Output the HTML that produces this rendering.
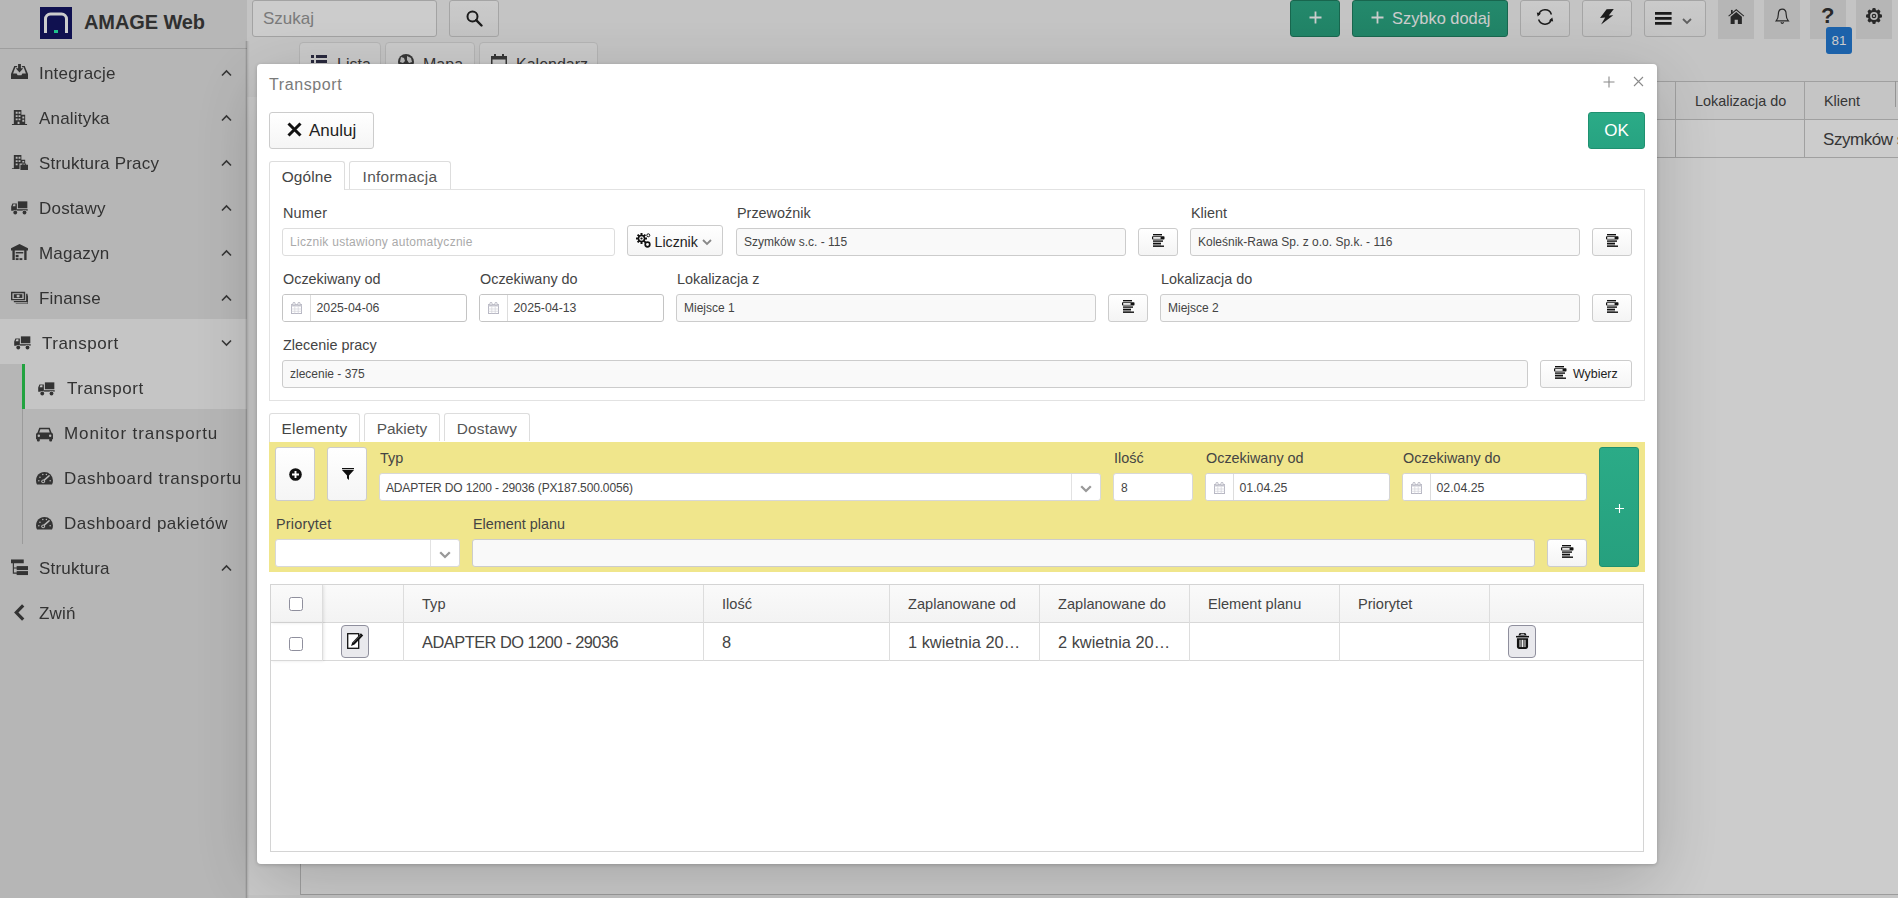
<!DOCTYPE html>
<html lang="pl">
<head>
<meta charset="utf-8">
<title>AMAGE Web - Transport</title>
<style>
*{box-sizing:border-box;margin:0;padding:0}
html,body{width:1898px;height:898px;overflow:hidden}
body{font-family:"Liberation Sans",sans-serif;color:#444;background:#fff;position:relative}
.abs{position:absolute}
#menu{will-change:transform}
svg{display:block}
#page{position:absolute;left:0;top:0;width:1898px;height:898px;background:#f5f5f5;overflow:hidden}
#content{position:absolute;left:247px;top:97px;width:1651px;height:801px;background:#fdfdfd}
#side{position:absolute;left:0;top:0;width:247px;height:898px;background:#e4e4e4}
#sidesh{position:absolute;left:245px;top:41px;width:5px;height:857px;background:linear-gradient(to right,rgba(0,0,0,0),rgba(0,0,0,.17) 30%,rgba(0,0,0,.12) 45%,rgba(0,0,0,.03) 75%,rgba(0,0,0,0))}
#sidehead{position:absolute;left:0;top:0;width:247px;height:49px;border-bottom:1px solid #c6c6c6;background:#e5e5e5}
#logo{position:absolute;left:40px;top:7px;width:32px;height:32px;background:#141664}
#menu{position:absolute;left:0;top:49px;width:247px;height:849px;background:#e4e4e4}
#brand{position:absolute;left:84px;top:9px;font-size:20px;font-weight:bold;color:#3c3c3c;letter-spacing:-.1px;white-space:nowrap;line-height:26px}
.mi{position:absolute;left:0;width:247px;height:45px;font-size:17px;letter-spacing:.2px;color:#404040;line-height:45px;white-space:nowrap}
.mi .t{position:absolute;left:39px;top:2px}
.mi .ic{position:absolute;left:11px;top:15px;width:17px;height:17px}
.mi .ch{position:absolute;left:221px;top:20px;width:11px;height:8px}
.sub{position:absolute;left:22px;width:225px;height:45px;font-size:17px;letter-spacing:.2px;color:#404040;line-height:45px;white-space:nowrap;background:#e4e4e4;border-left:1px solid #c2c2c2}
.sub .t{position:absolute;left:41px;top:2px}
.sub .ic{position:absolute;left:13px;top:16px;width:17px;height:17px}
.tb{position:absolute;top:0;height:37px;border:1px solid #cfcfcf;border-radius:3px;background:linear-gradient(#fefefe,#f4f4f4)}
.tbg{position:absolute;top:0;height:37px;border:1px solid #1f8062;border-radius:3px;background:linear-gradient(#2dab87,#29a480);color:#fff;font-size:16.4px;line-height:34px;white-space:nowrap}
.sq{position:absolute;top:0;width:36px;height:39px;background:#e4e4e4}
.ptab{position:absolute;top:42px;height:40px;border:1px solid #e2e2e2;border-radius:4px 4px 0 0;background:#fdfdfd;font-size:16px;color:#444;line-height:38px;white-space:nowrap}
#mi{position:absolute;left:0;top:4px;width:1400px;height:792px;background:#fff}
#mc{position:absolute;left:0;top:-4px;width:1400px;height:800px}
#ov{position:absolute;left:0;top:0;width:1898px;height:898px;background:rgba(0,0,0,.2)}
#modal{position:absolute;left:257px;top:64px;width:1400px;height:800px;background:#fff;border-radius:4px;box-shadow:0 1px 4px rgba(0,0,0,.2),0 18px 70px rgba(0,0,0,.19)}
#mc .title{position:absolute;left:12px;top:9.500px;font-size:16px;letter-spacing:.6px;color:#7a7a7a;line-height:22px}
.btn{position:absolute;border:1px solid #ccc;border-radius:3px;background:linear-gradient(#fff,#f5f5f5);color:#222}
.inp{position:absolute;height:28px;border:1px solid #ccc;border-radius:3px;background:#f9f9f9;font-size:12px;line-height:26px;color:#444;padding-left:7px;white-space:nowrap;overflow:hidden}
.inp.w{background:#fff}
.lbl{position:absolute;font-size:14.400px;line-height:18px;color:#444;white-space:nowrap}
.tab{position:absolute;height:28px;border:1px solid #ddd;border-bottom:none;border-radius:3px 3px 0 0;font-size:15.400px;line-height:30px;color:#555;text-align:center;white-space:nowrap;background:#fff}
.tab.on{color:#444;z-index:2;height:29px}

.pick{position:absolute;width:40px;height:28px;border:1px solid #ccc;border-radius:3px;background:linear-gradient(#fff,#f4f4f4)}
.pick svg,.pk{position:absolute;left:13px;top:5px;width:13px;height:13px}
.addon{position:absolute;left:0;top:0;width:28px;height:26px;border-right:1px solid #ddd;background:#fff}
.addon svg{position:absolute;left:8px;top:7px;width:11px;height:12px}
.th{position:absolute;top:0;height:38px;border-right:1px solid #ddd;font-size:14.600px;line-height:39px;color:#444;padding-left:18px;white-space:nowrap}
.td{position:absolute;top:38px;height:38px;border-right:1px solid #ddd;font-size:16.400px;line-height:39px;color:#444;padding-left:18px;white-space:nowrap;overflow:hidden}
.cb{position:absolute;width:14px;height:14px;border:1px solid #8f8f9d;border-radius:2.500px;background:#fff}
.fxb{position:absolute;width:28px;height:33px;border:1px solid #8f8f9d;border-radius:4px;background:#e9e9ed}
</style>
</head>
<body>
<div id="page">
<div id="content"></div>
<div class="abs" style="left:300px;top:81px;width:1598px;height:814px;background:#fff;border-left:1px solid #c9c9c9;border-bottom:1px solid #c4c4c4"></div>
<div class="abs" style="left:247px;top:895px;width:1651px;height:3px;background:#f7f7f7"></div>
<div class="ptab" style="left:299px;width:82px"><svg class="abs" style="left:11px;top:12px" width="16" height="14" viewBox="0 0 16 14"><g fill="#33334d"><rect x="0" y="0" width="3" height="3"/><rect x="5" y="0" width="11" height="3"/><rect x="0" y="5" width="3" height="3"/><rect x="5" y="5" width="11" height="3"/><rect x="0" y="10" width="3" height="3"/><rect x="5" y="10" width="11" height="3"/></g></svg><span class="abs" style="left:37px;top:3px">Lista</span></div>
<div class="ptab" style="left:385px;width:90px"><svg class="abs" style="left:12px;top:11px" width="16" height="16" viewBox="0 0 16 16"><circle cx="8" cy="8" r="8" fill="#444"/><path d="M3 3l3 1 1 3-2 2-3-1zM9 2l4 2 1 4-3 1-2-3zM6 10l4 1-1 4-3-2z" fill="#e8e8e8"/></svg><span class="abs" style="left:37px;top:3px">Mapa</span></div>
<div class="ptab" style="left:479px;width:119px"><svg class="abs" style="left:11px;top:11px" width="16" height="16" viewBox="0 0 16 16"><path d="M0 2h16v14H0zM1.500 5.500v9h13v-9z" fill="#444" fill-rule="evenodd"/><rect x="3" y="0" width="2" height="4" fill="#444"/><rect x="11" y="0" width="2" height="4" fill="#444"/></svg><span class="abs" style="left:36px;top:3px">Kalendarz</span></div>
<div class="abs" style="left:1657px;top:81px;width:241px;height:39px;background:#f7f7f7;border-top:1px solid #c8c8c8;border-bottom:1px solid #c8c8c8"></div>
<div class="abs" style="left:1657px;top:157px;width:241px;height:1px;background:#c8c8c8"></div>
<div class="abs" style="left:1675px;top:81px;width:1px;height:77px;background:#c8c8c8"></div>
<div class="abs" style="left:1804px;top:81px;width:1px;height:77px;background:#c8c8c8"></div>
<div class="abs" style="left:1895px;top:81px;width:1px;height:26px;background:#bbb"></div>
<div class="abs" style="left:1695px;top:91px;font-size:14.400px;line-height:20px;color:#444;white-space:nowrap">Lokalizacja do</div>
<div class="abs" style="left:1824px;top:91px;font-size:14.400px;line-height:20px;color:#444;white-space:nowrap">Klient</div>
<div class="abs" style="left:1823px;top:128px;font-size:17px;letter-spacing:-.45px;line-height:24px;color:#444;white-space:nowrap">Szymków s.c.</div>
<div class="tb" style="left:252px;width:185px;background:#fff;border-color:#ccc"><span class="abs" style="left:10px;top:6px;font-size:17px;line-height:24px;color:#999">Szukaj</span></div>
<div class="tb" style="left:449px;width:50px"><svg class="abs" style="left:16px;top:9px" width="17" height="17" viewBox="0 0 17 17"><circle cx="6.500" cy="6.500" r="5" fill="none" stroke="#222" stroke-width="2"/><path d="M10.200 10.200L15.500 15.500" stroke="#222" stroke-width="2.400" stroke-linecap="round"/></svg></div>
<div class="tbg" style="left:1290px;width:50px"><svg class="abs" style="left:18px;top:10px" width="13" height="13" viewBox="0 0 13 13"><path d="M6.500 0.500v12M0.500 6.500h12" stroke="#fff" stroke-width="1.800"/></svg></div>
<div class="tbg" style="left:1352px;width:156px"><svg class="abs" style="left:18px;top:10px" width="13" height="13" viewBox="0 0 13 13"><path d="M6.500 0.500v12M0.500 6.500h12" stroke="#fff" stroke-width="1.800"/></svg><span class="abs" style="left:39px;top:0">Szybko dodaj</span></div>
<div class="tb" style="left:1520px;width:50px"><svg class="abs" style="left:14.500px;top:7px" width="18" height="18" viewBox="0 0 18 18"><path d="M2.600 6.800A6.700 6.700 0 0 1 15.400 6.400" fill="none" stroke="#222" stroke-width="1.500"/><path d="M15.400 11.200A6.700 6.700 0 0 1 2.600 11.600" fill="none" stroke="#222" stroke-width="1.500"/><path d="M.8 4.600l4.200 1-3.300 3z" fill="#222"/><path d="M17.200 13.400l-4.200-1 3.300-3z" fill="#222"/></svg></div>
<div class="tb" style="left:1582px;width:50px"><svg class="abs" style="left:17px;top:8px" width="14" height="16" viewBox="0 0 14 16"><path d="M6.600 .3L13.800 0 8.800 6.600l4.500-.4L1.100 15.500l4.100-6.900L0 9z" fill="#222"/></svg></div>
<div class="tb" style="left:1644px;width:62px"><svg class="abs" style="left:10px;top:11px" width="17" height="13" viewBox="0 0 17 13"><path d="M0 1.400h16.600M0 6.400h16.600M0 11.400h16.600" stroke="#222" stroke-width="2.800"/></svg><svg class="abs" style="left:37px;top:17px" width="10" height="7.0" viewBox="0 0 10 7"><path d="M1 1l4 4 4-4" fill="none" stroke="#777" stroke-width="1.8"/></svg></div>
<div class="sq" style="left:1718px"><svg class="abs" style="left:10px;top:8.500px" width="16.500" height="15" viewBox="0 0 17 16"><g transform="translate(17 0) scale(-1 1)"><path d="M8.500 0L17 7.200l-.7 .8L8.500 1.500.7 8 0 7.200z" fill="#333"/><path d="M2.500 8.200l6-5 6 5v7.800h-4.300v-4.500h-3.400v4.500H2.500z" fill="#333"/><rect x="12.300" y="1" width="1.800" height="4" fill="#333"/></g></svg></div>
<div class="sq" style="left:1764px"><svg class="abs" style="left:11px;top:8px" width="14.500" height="17.500" viewBox="0 0 16 18" preserveAspectRatio="none"><path d="M8 1.200c2.800 0 4.300 2.300 4.300 5.300 0 3.500 1 5.200 2.400 6.700H1.300c1.400-1.500 2.400-3.200 2.400-6.700C3.700 3.500 5.200 1.200 8 1.200z" fill="none" stroke="#333" stroke-width="1.300"/><path d="M6.500 14.700a1.600 1.600 0 0 0 3 0" fill="none" stroke="#333" stroke-width="1.300"/></svg></div>
<div class="sq" style="left:1810px"><span class="abs" style="left:11px;top:3px;font-size:22px;font-weight:bold;line-height:26px;color:#333">?</span></div>
<div class="sq" style="left:1856px"><svg class="abs" style="left:10px;top:8px" width="16" height="16" viewBox="0 0 16 16"><g fill="#333"><circle cx="8" cy="8" r="6.200"/><rect x="6.300" y="0" width="3.400" height="16" rx="1.200"/><rect x="0" y="6.300" width="16" height="3.400" rx="1.200"/><rect x="6.300" y="0" width="3.400" height="16" rx="1.200" transform="rotate(45 8 8)"/><rect x="6.300" y="0" width="3.400" height="16" rx="1.200" transform="rotate(-45 8 8)"/></g><circle cx="8" cy="8" r="3.900" fill="#e4e4e4"/><circle cx="8" cy="8" r="2.300" fill="#333"/><circle cx="8" cy="8" r="1.100" fill="#e4e4e4"/></svg></div>
<div class="abs" style="left:1826px;top:27px;width:26px;height:27px;border-radius:3px;background:#237bd5;color:#fff;font-size:13.400px;line-height:28px;text-align:center">81</div>
<div id="side">
<div id="sidehead"><div id="logo"><svg width="32" height="32" viewBox="0 0 32 32"><path d="M5.500 26V12a5 5 0 0 1 5-5h11a5 5 0 0 1 5 5V26" fill="none" stroke="#ffffff" stroke-width="3"/><rect x="14" y="23" width="4" height="3" fill="#27f0b0"/></svg></div><div id="brand">AMAGE Web</div></div>
<div id="menu">
<div class="mi" style="top:0px"><svg class="ic" viewBox="0 0 18 18"><path d="M3.500 2h3v1.500H4.600L2.200 10H6l1 2h4l1-2h3.800L13.400 3.500h-1.900V2h3L18 10.500V16H0v-5.500z" fill="#404040"/><path d="M7.500 0h3v4.500h2.500L9 9 5 4.500h2.500z" fill="#404040"/></svg><span class="t">Integracje</span><svg class="ch" viewBox="0 0 11 8"><path d="M1 6.500L5.500 2 10 6.500" fill="none" stroke="#444" stroke-width="1.600"/></svg></div>
<div class="mi" style="top:45px"><svg class="ic" viewBox="0 0 18 18"><path d="M3 1h8v5h4v10h2v1H1v-1h2zM5 3v2h2V3zM8 3v2h2V3zM5 6.500v2h2v-2zM8 6.500v2h2v-2zM5 10v2h2v-2zM8 10v2h2v-2zM12 8v2h2V8zM12 11.500v2h2v-2zM7 13.500V16h2v-2.500z" fill="#404040" fill-rule="evenodd"/></svg><span class="t">Analityka</span><svg class="ch" viewBox="0 0 11 8"><path d="M1 6.500L5.500 2 10 6.500" fill="none" stroke="#444" stroke-width="1.600"/></svg></div>
<div class="mi" style="top:90px"><svg class="ic" viewBox="0 0 18 18"><path d="M3 1h8v5h4v4h-6v6H1v-1h2zM5 3v2h2V3zM8 3v2h2V3zM5 6.500v2h2v-2zM8 6.500v2h2v-2zM5 10v2h2v-2zM12 7.500v1.500h2V7.500z" fill="#404040" fill-rule="evenodd"/><path d="M10 11.500h8V17h-8zM12 11.500v-1.500h4v1.500h-1v-.7h-2v.7z" fill="#404040"/></svg><span class="t">Struktura Pracy</span><svg class="ch" viewBox="0 0 11 8"><path d="M1 6.500L5.500 2 10 6.500" fill="none" stroke="#444" stroke-width="1.600"/></svg></div>
<div class="mi" style="top:135px"><svg class="ic" viewBox="0 0 18 18"><rect x="7.300" y="2.500" width="10" height="7.300" fill="#404040"/><path d="M.2 12.500V8l1.300-3.300h4.700v7.800zM1.700 7.800h3V5.600H2.600z" fill="#404040" fill-rule="evenodd"/><rect x="6.200" y="10.800" width="11.500" height="1.500" fill="#404040"/><circle cx="4.500" cy="14.300" r="2.700" fill="#e4e4e4"/><circle cx="14.300" cy="14.300" r="2.700" fill="#e4e4e4"/><circle cx="4.500" cy="14.300" r="2" fill="#404040"/><circle cx="14.300" cy="14.300" r="2" fill="#404040"/></svg><span class="t">Dostawy</span><svg class="ch" viewBox="0 0 11 8"><path d="M1 6.500L5.500 2 10 6.500" fill="none" stroke="#444" stroke-width="1.600"/></svg></div>
<div class="mi" style="top:180px"><svg class="ic" viewBox="0 0 18 18"><path d="M9 0l9 4.500V7h-1.500v10H14V7H4v10H1.500V7H0V4.500z" fill="#404040"/><rect x="5" y="8.500" width="8" height="1.500" fill="#404040"/><rect x="5" y="11.500" width="3" height="2.500" fill="#404040"/><rect x="5" y="15" width="3" height="2" fill="#404040"/><rect x="9" y="15" width="3" height="2" fill="#404040"/></svg><span class="t">Magazyn</span><svg class="ch" viewBox="0 0 11 8"><path d="M1 6.500L5.500 2 10 6.500" fill="none" stroke="#444" stroke-width="1.600"/></svg></div>
<div class="mi" style="top:225px"><svg class="ic" viewBox="0 0 18 18"><path d="M0 3h15v9H0zM1.500 4.500v6h12v-6z" fill="#404040" fill-rule="evenodd"/><path d="M3 5.500h9v4H3z" fill="#404040"/><ellipse cx="7.500" cy="7.500" rx="1.700" ry="1.500" fill="#e4e4e4"/><path d="M16 5h1.500v9H3v-1.200h13zM17.500 7H18v8.500H5V15h12.500z" fill="#404040"/></svg><span class="t">Finanse</span><svg class="ch" viewBox="0 0 11 8"><path d="M1 6.500L5.500 2 10 6.500" fill="none" stroke="#444" stroke-width="1.600"/></svg></div>
<div class="mi" style="top:270px;background:#f7f7f7"><span class="abs" style="left:3px;top:0;width:30px;height:45px"><svg class="ic" viewBox="0 0 18 18"><rect x="7.300" y="2.500" width="10" height="7.300" fill="#404040"/><path d="M.2 12.500V8l1.300-3.300h4.700v7.800zM1.700 7.800h3V5.600H2.600z" fill="#404040" fill-rule="evenodd"/><rect x="6.200" y="10.800" width="11.500" height="1.500" fill="#404040"/><circle cx="4.500" cy="14.300" r="2.700" fill="#f7f7f7"/><circle cx="14.300" cy="14.300" r="2.700" fill="#f7f7f7"/><circle cx="4.500" cy="14.300" r="2" fill="#404040"/><circle cx="14.300" cy="14.300" r="2" fill="#404040"/></svg></span><span class="t" style="left:42px;letter-spacing:.5px">Transport</span><svg class="ch" viewBox="0 0 11 8"><path d="M1 1.500L5.500 6 10 1.500" fill="none" stroke="#444" stroke-width="1.600"/></svg></div>
<div class="sub" style="top:315px;background:#f7f7f7;border-left:3px solid #2bcc50"><span class="abs" style="left:0;top:0;width:30px;height:45px"><svg class="ic" viewBox="0 0 18 18"><rect x="7.300" y="2.500" width="10" height="7.300" fill="#404040"/><path d="M.2 12.500V8l1.300-3.300h4.700v7.800zM1.700 7.800h3V5.600H2.600z" fill="#404040" fill-rule="evenodd"/><rect x="6.200" y="10.800" width="11.500" height="1.500" fill="#404040"/><circle cx="4.500" cy="14.300" r="2.700" fill="#f7f7f7"/><circle cx="14.300" cy="14.300" r="2.700" fill="#f7f7f7"/><circle cx="4.500" cy="14.300" r="2" fill="#404040"/><circle cx="14.300" cy="14.300" r="2" fill="#404040"/></svg></span><span class="t" style="left:42px;letter-spacing:0.5px">Transport</span></div>
<div class="sub" style="top:360px"><svg class="ic" viewBox="0 0 18 18"><path d="M3.500 3h11l2 5.200c.9.300 1.500 1 1.500 2V15h-1v1.500c0 .6-.4 1-1 1h-1c-.6 0-1-.4-1-1V15H4v1.500c0 .6-.4 1-1 1H2c-.6 0-1-.4-1-1V15H0v-4.800c0-1 .6-1.700 1.500-2zM4.600 4.600L3.400 8h11.200l-1.200-3.400zM3 10a1.300 1.300 0 1 0 0 2.600A1.300 1.300 0 0 0 3 10zM15 10a1.300 1.300 0 1 0 0 2.600 1.300 1.300 0 0 0 0-2.600z" fill="#404040" fill-rule="evenodd"/></svg><span class="t" style="letter-spacing:0.9px">Monitor transportu</span></div>
<div class="sub" style="top:405px"><svg class="ic" viewBox="0 0 18 18"><path d="M9 2a9 9 0 0 1 9 9c0 1.600-.4 3-1.100 4.300H1.100A9 9 0 0 1 9 2z" fill="#404040"/><path d="M13.800 6.200L8.400 11" stroke="#e4e4e4" stroke-width="1.600" stroke-linecap="round"/><circle cx="7.600" cy="12" r="2" fill="#e4e4e4"/><circle cx="7.600" cy="12" r="1" fill="#404040"/><g fill="#e4e4e4"><circle cx="3" cy="11.500" r=".8"/><circle cx="4.200" cy="7.600" r=".8"/><circle cx="7.200" cy="4.800" r=".8"/><circle cx="11" cy="4.800" r=".8"/><circle cx="15" cy="11.500" r=".8"/></g></svg><span class="t" style="letter-spacing:0.67px">Dashboard transportu</span></div>
<div class="sub" style="top:450px"><svg class="ic" viewBox="0 0 18 18"><path d="M9 2a9 9 0 0 1 9 9c0 1.600-.4 3-1.100 4.300H1.100A9 9 0 0 1 9 2z" fill="#404040"/><path d="M13.800 6.200L8.400 11" stroke="#e4e4e4" stroke-width="1.600" stroke-linecap="round"/><circle cx="7.600" cy="12" r="2" fill="#e4e4e4"/><circle cx="7.600" cy="12" r="1" fill="#404040"/><g fill="#e4e4e4"><circle cx="3" cy="11.500" r=".8"/><circle cx="4.200" cy="7.600" r=".8"/><circle cx="7.200" cy="4.800" r=".8"/><circle cx="11" cy="4.800" r=".8"/><circle cx="15" cy="11.500" r=".8"/></g></svg><span class="t" style="letter-spacing:0.5px">Dashboard pakietów</span></div>
<div class="mi" style="top:495px"><svg class="ic" viewBox="0 0 18 18"><rect x="0" y=".5" width="13.500" height="4" fill="#404040"/><rect x="6" y="7.500" width="12" height="4.200" fill="#404040"/><rect x="6" y="12.800" width="12" height="4.200" fill="#404040"/><path d="M2.500 4v11h4M2.500 9.500h4" fill="none" stroke="#404040" stroke-width="1.200"/></svg><span class="t">Struktura</span><svg class="ch" viewBox="0 0 11 8"><path d="M1 6.500L5.500 2 10 6.500" fill="none" stroke="#444" stroke-width="1.600"/></svg></div>
<div class="mi" style="top:540px"><svg class="abs" style="left:14px;top:15px" width="11" height="17" viewBox="0 0 11 17"><path d="M9.200 1.300L2.300 8.500l6.900 7.200" fill="none" stroke="#404040" stroke-width="3.200"/></svg><span class="t">Zwiń</span></div>
</div>
</div>
<div id="sidesh"></div>
</div>
<div id="ov"></div>
<div id="modal"><div id="mi"><div id="mc">
<div class="title">Transport</div>
<svg class="abs" style="left:1346px;top:12px" width="12" height="12" viewBox="0 0 12 12"><path d="M6 0.500v11M0.500 6h11" stroke="#8a8a8a" stroke-width="1.100"/></svg>
<svg class="abs" style="left:1376px;top:12px" width="11" height="11" viewBox="0 0 11 11"><path d="M1 1l9 9M10 1l-9 9" stroke="#8a8a8a" stroke-width="1.100"/></svg>
<div class="btn" style="left:12px;top:48px;width:105px;height:37px"><svg class="abs" style="left:16.500px;top:8.500px" width="15" height="15" viewBox="0 0 15 15"><path d="M1.500 1.500l12 12M13.500 1.500l-12 12" stroke="#111" stroke-width="3"/></svg><span class="abs" style="left:39px;top:6px;font-size:17px;line-height:24px;color:#222">Anuluj</span></div>
<div class="abs" style="left:1331px;top:48px;width:57px;height:37px;border:1px solid #1f9170;border-radius:3px;background:linear-gradient(#2bab87,#27a381);color:#fff;font-size:17px;line-height:36px;text-align:center">OK</div>
<div class="abs" style="left:12px;top:125px;width:1376px;height:212px;border:1px solid #e2e2e2"></div>
<div class="tab on" style="left:12px;top:97px;width:76px;letter-spacing:.15px">Ogólne</div>
<div class="tab" style="left:92px;top:97px;width:102px;letter-spacing:.3px">Informacja</div>
<div class="lbl" style="left:26px;top:140px;letter-spacing:.2px">Numer</div>
<div class="lbl" style="left:480px;top:140px;">Przewoźnik</div>
<div class="lbl" style="left:934px;top:140px;">Klient</div>
<div class="inp w" style="left:25px;top:164px;width:333px;border-color:#ddd"><span style="color:#aaa;letter-spacing:.28px">Licznik ustawiony automatycznie</span></div>
<div class="btn" style="left:370px;top:161px;width:96px;height:31px"><svg class="abs" style="left:8px;top:7px" width="15" height="15" viewBox="0 0 15 15"><g fill="#111"><circle cx="5.500" cy="5.500" r="3.800"/><rect x="4.500" y="0" width="2" height="11"/><rect x="0" y="4.500" width="11" height="2"/><rect x="4.500" y="0" width="2" height="11" transform="rotate(45 5.500 5.500)"/><rect x="4.500" y="0" width="2" height="11" transform="rotate(-45 5.500 5.500)"/></g><circle cx="5.500" cy="5.500" r="2.200" fill="#fafafa"/><circle cx="5.500" cy="5.500" r="1.100" fill="#111"/><circle cx="11.500" cy="11.500" r="2.300" fill="none" stroke="#111" stroke-width="1.700"/><circle cx="12.300" cy="2.300" r="1.500" fill="none" stroke="#111" stroke-width="1"/></svg><span class="abs" style="left:26.500px;top:5.500px;font-size:14.200px;line-height:20px;color:#222">Licznik</span><svg class="abs" style="left:74px;top:13px" width="10" height="7.0" viewBox="0 0 10 7"><path d="M1 1l4 4 4-4" fill="none" stroke="#888" stroke-width="1.8"/></svg></div>
<div class="inp " style="left:479px;top:164px;width:390px;">Szymków s.c. - 115</div>
<div class="pick" style="left:881px;top:164px"><svg viewBox="0 0 13 13"><rect x="1" y="0" width="9" height="1.400" fill="#111"/><rect x="0" y="2.300" width="12.500" height="3.300" rx=".8" fill="#111"/><rect x="1.200" y="3.100" width="7.400" height="1.700" fill="#fff"/><rect x="1" y="6.400" width="10" height="1.400" fill="#111"/><rect x="1" y="8.700" width="8" height="1.400" fill="#111"/><rect x="1" y="10" width="8" height="1.600" fill="#888"/><rect x="1" y="11.500" width="11" height="1.400" fill="#111"/></svg></div>
<div class="inp " style="left:933px;top:164px;width:390px;">Koleśnik-Rawa Sp. z o.o. Sp.k. - 116</div>
<div class="pick" style="left:1335px;top:164px"><svg viewBox="0 0 13 13"><rect x="1" y="0" width="9" height="1.400" fill="#111"/><rect x="0" y="2.300" width="12.500" height="3.300" rx=".8" fill="#111"/><rect x="1.200" y="3.100" width="7.400" height="1.700" fill="#fff"/><rect x="1" y="6.400" width="10" height="1.400" fill="#111"/><rect x="1" y="8.700" width="8" height="1.400" fill="#111"/><rect x="1" y="10" width="8" height="1.600" fill="#888"/><rect x="1" y="11.500" width="11" height="1.400" fill="#111"/></svg></div>
<div class="lbl" style="left:26px;top:206px;">Oczekiwany od</div>
<div class="lbl" style="left:223px;top:206px;">Oczekiwany do</div>
<div class="lbl" style="left:420px;top:206px;">Lokalizacja z</div>
<div class="lbl" style="left:904px;top:206px;">Lokalizacja do</div>
<div class="inp w" style="left:25px;top:230px;width:185px;padding-left:33.500px;border-color:#c4c4c4;font-size:12.300px;line-height:26px">2025-04-06<div class="addon"><span class="abs" style="left:0;top:0px"><svg viewBox="0 0 11 12"><rect x=".5" y="2.500" width="10" height="9" fill="#fff" stroke="#b8b8c4" stroke-width="1"/><rect x=".5" y="2.500" width="10" height="2" fill="#cbcbd3"/><path d="M.5 7h10M.5 9.300h10M3.800 4.500v7M7.200 4.500v7" stroke="#d2d2da" stroke-width=".7"/><ellipse cx="3" cy="1.900" rx="1.100" ry="1.700" fill="#fff" stroke="#b4b4c0" stroke-width=".9"/><ellipse cx="8" cy="1.900" rx="1.100" ry="1.700" fill="#fff" stroke="#b4b4c0" stroke-width=".9"/></svg></span></div></div>
<div class="inp w" style="left:222px;top:230px;width:185px;padding-left:33.500px;border-color:#c4c4c4;font-size:12.300px;line-height:26px">2025-04-13<div class="addon"><span class="abs" style="left:0;top:0px"><svg viewBox="0 0 11 12"><rect x=".5" y="2.500" width="10" height="9" fill="#fff" stroke="#b8b8c4" stroke-width="1"/><rect x=".5" y="2.500" width="10" height="2" fill="#cbcbd3"/><path d="M.5 7h10M.5 9.300h10M3.800 4.500v7M7.200 4.500v7" stroke="#d2d2da" stroke-width=".7"/><ellipse cx="3" cy="1.900" rx="1.100" ry="1.700" fill="#fff" stroke="#b4b4c0" stroke-width=".9"/><ellipse cx="8" cy="1.900" rx="1.100" ry="1.700" fill="#fff" stroke="#b4b4c0" stroke-width=".9"/></svg></span></div></div>
<div class="inp " style="left:419px;top:230px;width:420px;">Miejsce 1</div>
<div class="pick" style="left:851px;top:230px"><svg viewBox="0 0 13 13"><rect x="1" y="0" width="9" height="1.400" fill="#111"/><rect x="0" y="2.300" width="12.500" height="3.300" rx=".8" fill="#111"/><rect x="1.200" y="3.100" width="7.400" height="1.700" fill="#fff"/><rect x="1" y="6.400" width="10" height="1.400" fill="#111"/><rect x="1" y="8.700" width="8" height="1.400" fill="#111"/><rect x="1" y="10" width="8" height="1.600" fill="#888"/><rect x="1" y="11.500" width="11" height="1.400" fill="#111"/></svg></div>
<div class="inp " style="left:903px;top:230px;width:420px;">Miejsce 2</div>
<div class="pick" style="left:1335px;top:230px"><svg viewBox="0 0 13 13"><rect x="1" y="0" width="9" height="1.400" fill="#111"/><rect x="0" y="2.300" width="12.500" height="3.300" rx=".8" fill="#111"/><rect x="1.200" y="3.100" width="7.400" height="1.700" fill="#fff"/><rect x="1" y="6.400" width="10" height="1.400" fill="#111"/><rect x="1" y="8.700" width="8" height="1.400" fill="#111"/><rect x="1" y="10" width="8" height="1.600" fill="#888"/><rect x="1" y="11.500" width="11" height="1.400" fill="#111"/></svg></div>
<div class="lbl" style="left:26px;top:272px;">Zlecenie pracy</div>
<div class="inp " style="left:25px;top:296px;width:1246px;">zlecenie - 375</div>
<div class="btn" style="left:1283px;top:296px;width:92px;height:28px"><span class="pk" style="left:13px;top:5px"><svg viewBox="0 0 13 13"><rect x="1" y="0" width="9" height="1.400" fill="#111"/><rect x="0" y="2.300" width="12.500" height="3.300" rx=".8" fill="#111"/><rect x="1.200" y="3.100" width="7.400" height="1.700" fill="#fff"/><rect x="1" y="6.400" width="10" height="1.400" fill="#111"/><rect x="1" y="8.700" width="8" height="1.400" fill="#111"/><rect x="1" y="10" width="8" height="1.600" fill="#888"/><rect x="1" y="11.500" width="11" height="1.400" fill="#111"/></svg></span><span class="abs" style="left:32px;top:5px;font-size:12.400px;line-height:16px;color:#222">Wybierz</span></div>
<div class="tab on" style="left:12px;top:349px;width:91px;letter-spacing:.2px">Elementy</div>
<div class="tab" style="left:107px;top:349px;width:76px">Pakiety</div>
<div class="tab" style="left:187px;top:349px;width:86px;letter-spacing:.2px">Dostawy</div>
<div class="abs" style="left:12px;top:378px;width:1376px;height:130px;background:#f0e68c"></div>
<div class="btn" style="left:18px;top:383px;width:40px;height:54px"><svg class="abs" style="left:13px;top:20px" width="13" height="13" viewBox="0 0 13 13"><circle cx="6.500" cy="6.500" r="6.300" fill="#111"/><path d="M6.500 3v7M3 6.500h7" stroke="#fff" stroke-width="1.900"/></svg></div>
<div class="btn" style="left:70px;top:383px;width:40px;height:54px"><svg class="abs" style="left:14px;top:20px" width="12" height="13" viewBox="0 0 12 13"><path d="M0 0h12v1.200H0zM0 2h12L7 7.500V12l-2-1.700V7.500z" fill="#111"/></svg></div>
<div class="lbl" style="left:123px;top:385px;">Typ</div>
<div class="lbl" style="left:857px;top:385px;">Ilość</div>
<div class="lbl" style="left:949px;top:385px;">Oczekiwany od</div>
<div class="lbl" style="left:1146px;top:385px;">Oczekiwany do</div>
<div class="inp w" style="left:122px;top:409px;width:722px;padding-left:6px;border-color:#d8d8d8;letter-spacing:-.15px;line-height:28px">ADAPTER DO 1200 - 29036 (PX187.500.0056)</div>
<div class="abs" style="left:814px;top:410px;width:1px;height:26px;background:#e2e2e2"></div><svg class="abs" style="left:823px;top:420.5px" width="12" height="8.4" viewBox="0 0 10 7"><path d="M1 1l4 4 4-4" fill="none" stroke="#999" stroke-width="1.9"/></svg><div class="inp w" style="left:856px;top:409px;width:80px;border-color:#d8d8d8;line-height:28px">8</div>
<div class="inp w" style="left:948px;top:409px;width:185px;padding-left:33.500px;border-color:#d4d4d4;font-size:12.300px;line-height:28px">01.04.25<div class="addon"><span class="abs" style="left:0;top:1px"><svg viewBox="0 0 11 12"><rect x=".5" y="2.500" width="10" height="9" fill="#fff" stroke="#b8b8c4" stroke-width="1"/><rect x=".5" y="2.500" width="10" height="2" fill="#cbcbd3"/><path d="M.5 7h10M.5 9.300h10M3.800 4.500v7M7.200 4.500v7" stroke="#d2d2da" stroke-width=".7"/><ellipse cx="3" cy="1.900" rx="1.100" ry="1.700" fill="#fff" stroke="#b4b4c0" stroke-width=".9"/><ellipse cx="8" cy="1.900" rx="1.100" ry="1.700" fill="#fff" stroke="#b4b4c0" stroke-width=".9"/></svg></span></div></div>
<div class="inp w" style="left:1145px;top:409px;width:185px;padding-left:33.500px;border-color:#d4d4d4;font-size:12.300px;line-height:28px">02.04.25<div class="addon"><span class="abs" style="left:0;top:1px"><svg viewBox="0 0 11 12"><rect x=".5" y="2.500" width="10" height="9" fill="#fff" stroke="#b8b8c4" stroke-width="1"/><rect x=".5" y="2.500" width="10" height="2" fill="#cbcbd3"/><path d="M.5 7h10M.5 9.300h10M3.800 4.500v7M7.200 4.500v7" stroke="#d2d2da" stroke-width=".7"/><ellipse cx="3" cy="1.900" rx="1.100" ry="1.700" fill="#fff" stroke="#b4b4c0" stroke-width=".9"/><ellipse cx="8" cy="1.900" rx="1.100" ry="1.700" fill="#fff" stroke="#b4b4c0" stroke-width=".9"/></svg></span></div></div>
<div class="abs" style="left:1342px;top:383px;width:40px;height:120px;border:1px solid #1f9170;border-radius:3px;background:linear-gradient(#2bab87,#26a07e)"><svg class="abs" style="left:15px;top:56px" width="9" height="9" viewBox="0 0 9 9"><path d="M4.500 0v9M0 4.500h9" stroke="#fff" stroke-width="1.100"/></svg></div>
<div class="lbl" style="left:19px;top:451px;letter-spacing:.2px">Priorytet</div>
<div class="lbl" style="left:216px;top:451px;">Element planu</div>
<div class="inp w" style="left:18px;top:475px;width:185px;border-color:#d8d8d8"></div>
<div class="abs" style="left:173px;top:476px;width:1px;height:26px;background:#e2e2e2"></div><svg class="abs" style="left:182px;top:486.5px" width="12" height="8.4" viewBox="0 0 10 7"><path d="M1 1l4 4 4-4" fill="none" stroke="#999" stroke-width="1.9"/></svg><div class="inp " style="left:215px;top:475px;width:1063px;"></div>
<div class="pick" style="left:1290px;top:475px"><svg viewBox="0 0 13 13"><rect x="1" y="0" width="9" height="1.400" fill="#111"/><rect x="0" y="2.300" width="12.500" height="3.300" rx=".8" fill="#111"/><rect x="1.200" y="3.100" width="7.400" height="1.700" fill="#fff"/><rect x="1" y="6.400" width="10" height="1.400" fill="#111"/><rect x="1" y="8.700" width="8" height="1.400" fill="#111"/><rect x="1" y="10" width="8" height="1.600" fill="#888"/><rect x="1" y="11.500" width="11" height="1.400" fill="#111"/></svg></div>
<div class="abs" id="tbl" style="left:13px;top:520px;width:1374px;height:268px;border:1px solid #d4d4d4;background:#fff;overflow:hidden">
<div class="abs" style="left:0;top:0;width:1372px;height:38px;background:linear-gradient(#fafafa,#f3f3f3);border-bottom:1px solid #d8d8d8"></div>
<div class="abs" style="left:0;top:75px;width:1372px;height:1px;background:#d8d8d8"></div>
<div class="th" style="left:0px;width:52px;box-shadow:1px 0 3px rgba(0,0,0,.10);z-index:1;"></div><div class="td" style="left:0px;width:52px;box-shadow:1px 0 3px rgba(0,0,0,.10);z-index:1;"></div>
<div class="th" style="left:52px;width:81px;"></div><div class="td" style="left:52px;width:81px;"></div>
<div class="th" style="left:133px;width:300px;">Typ</div><div class="td" style="left:133px;width:300px;letter-spacing:-.5px">ADAPTER DO 1200 - 29036</div>
<div class="th" style="left:433px;width:186px;">Ilość</div><div class="td" style="left:433px;width:186px;">8</div>
<div class="th" style="left:619px;width:150px;">Zaplanowane od</div><div class="td" style="left:619px;width:150px;">1 kwietnia 20…</div>
<div class="th" style="left:769px;width:150px;">Zaplanowane do</div><div class="td" style="left:769px;width:150px;">2 kwietnia 20…</div>
<div class="th" style="left:919px;width:150px;">Element planu</div><div class="td" style="left:919px;width:150px;"></div>
<div class="th" style="left:1069px;width:150px;">Priorytet</div><div class="td" style="left:1069px;width:150px;"></div>
<div class="th" style="left:1219px;width:153px;border-right:none;"></div><div class="td" style="left:1219px;width:153px;border-right:none;"></div>
<div class="cb" style="left:18px;top:12px;z-index:2"></div><div class="cb" style="left:18px;top:52px;z-index:2"></div>
<div class="fxb" style="left:70px;top:40px"><svg class="abs" style="left:5px;top:7px" width="17" height="17" viewBox="0 0 17 17"><rect x=".7" y=".7" width="11" height="14.600" fill="#fff" stroke="#111" stroke-width="1.300"/><path d="M13.900 .3l2.300 2.300-8.700 9-3.500 1.500 1.300-3.600z" fill="#111"/><path d="M6 9.900l7.600-7.900" stroke="#999" stroke-width=".5"/></svg></div>
<div class="fxb" style="left:1237px;top:40px"><svg class="abs" style="left:6.500px;top:7px" width="13" height="16.500" viewBox="0 0 14 17" preserveAspectRatio="none"><path d="M4 0h6l1.500 2.500H2.500z" fill="#111"/><rect x="5" y=".8" width="4" height="1" fill="#e9e9ed"/><rect x="0" y="3" width="14" height="1.600" fill="#111"/><path d="M1 5.500h12v8.500c0 1.500-1 2.500-2.500 2.500h-7C2 16.500 1 15.500 1 14z" fill="#111"/><rect x="3.300" y="7" width="2.800" height="7.500" fill="#888"/><rect x="7.900" y="7" width="2.800" height="7.500" fill="#888"/><rect x="6.300" y="7" width="1.400" height="7.500" fill="#eee"/></svg></div>
</div>
</div></div></div>
</body>
</html>
